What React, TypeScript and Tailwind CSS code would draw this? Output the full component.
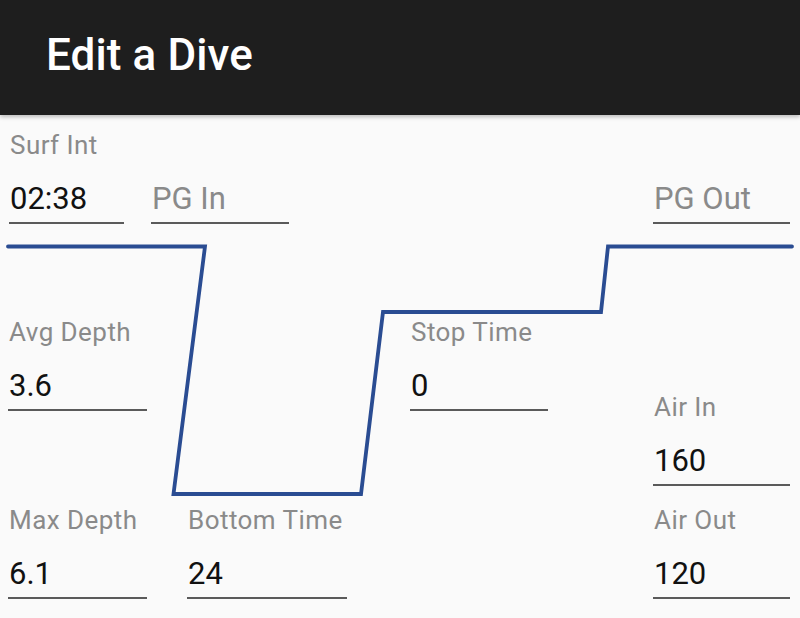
const font = { fontFamily: "Roboto, 'Noto Sans', sans-serif" }

type FieldProps = {
  label?: string
  value?: string
  hint?: string
  className?: string
}

function Field({ label, value, hint, className = "" }: FieldProps) {
  return (
    <div className={`flex flex-col ${className}`}>
      <div className="h-[32px] text-[26px] leading-[32px] tracking-[0.45px] text-[#8a8a8a] pl-[1px] whitespace-nowrap">
        {label}
      </div>
      <div
        className={`mt-[19px] h-[38px] text-[31px] leading-[38px] pl-[1px] whitespace-nowrap ${
          value ? "text-[#111111]" : "text-[#8a8a8a]"
        }`}
      >
        {value ?? hint}
      </div>
      <div className="mt-[4px] h-[2px] bg-[#5a5a5a]" />
    </div>
  )
}

function DiveProfile() {
  return (
    <svg
      className="absolute inset-0 pointer-events-none"
      width="800"
      height="618"
      viewBox="0 0 800 618"
    >
      <polyline
        points="8,246.5 205,246.5 173.5,494 361,494 383,312 601,312 608,246.5 792,246.5"
        fill="none"
        stroke="#2a4c92"
        strokeWidth="3.8"
        strokeLinejoin="miter"
        strokeLinecap="round"
      />
    </svg>
  )
}

export default function App() {
  return (
    <div className="relative w-[800px] h-[618px] overflow-hidden bg-[#fafafa]" style={font}>
      {/* App bar */}
      <div className="relative z-10 h-[115px] bg-[#1e1e1e] flex items-center pl-[46px] shadow-[0_2px_4px_rgba(0,0,0,0.25)]">
        <h1 className="text-[44px] font-medium text-white tracking-[0.1px] pb-[6px]">Edit a Dive</h1>
      </div>

      <DiveProfile />

      {/* Top row */}
      <div className="relative flex pt-[14px] pr-[10px]">
        <Field label="Surf Int" value="02:38" className="ml-[9px] w-[115px]" />
        <Field hint="PG In" className="ml-[27px] w-[138px]" />
        <Field hint="PG Out" className="ml-auto w-[137px]" />
      </div>

      {/* Lower fields */}
      <div className="relative flex pr-[10px]">
        <div className="flex flex-col ml-[8px] w-[139px]">
          <Field label="Avg Depth" value="3.6" className="mt-[92px]" />
          <Field label="Max Depth" value="6.1" className="mt-[93px]" />
        </div>
        <div className="flex flex-col ml-[40px] w-[160px]">
          <Field label="Bottom Time" value="24" className="mt-[280px]" />
        </div>
        <div className="flex flex-col ml-[63px] w-[138px]">
          <Field label="Stop Time" value="0" className="mt-[92px]" />
        </div>
        <div className="flex flex-col ml-auto w-[137px]">
          <Field label="Air In" value="160" className="mt-[167px]" />
          <Field label="Air Out" value="120" className="mt-[18px]" />
        </div>
      </div>
    </div>
  )
}
